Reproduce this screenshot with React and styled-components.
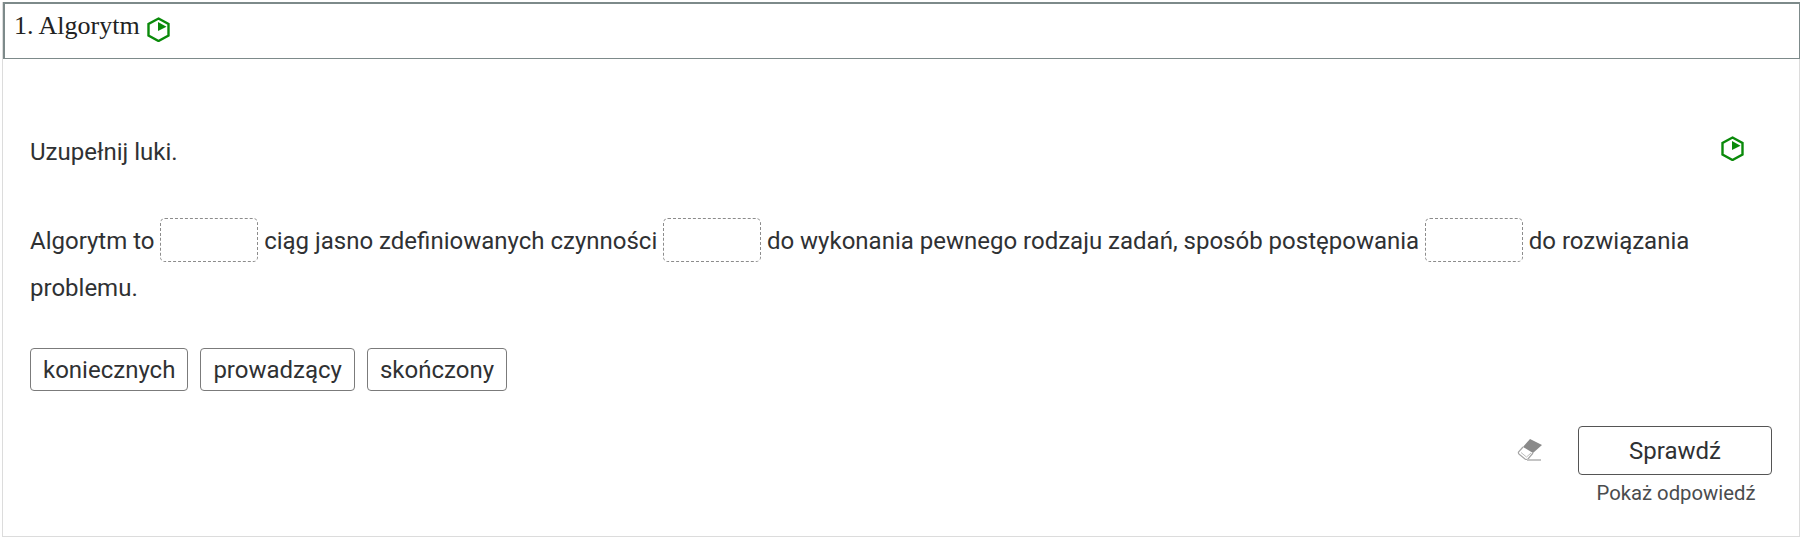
import styled, { createGlobalStyle } from "styled-components";

const GlobalStyle = createGlobalStyle`
  html, body {
    margin: 0;
    padding: 0;
    background: #fff;
  }
`;

const Card = styled.div`
  box-sizing: border-box;
  width: 1798px;
  height: 535px;
  margin: 2px 0 0 2px;
  border: 1px solid #dcdcdc;
  border-top: none;
  font-family: Roboto, sans-serif;
  color: #2f3133;
`;

const Header = styled.div`
  box-sizing: border-box;
  height: 57px;
  margin-right: -1px;
  border: 2px solid #7d8a8a;
  border-bottom-width: 1px;
  border-right-width: 1px;
  padding: 6px 0 0 9px;
  display: flex;
  align-items: flex-start;
  gap: 7px;
`;

const Title = styled.h2`
  margin: 0;
  font-family: "Liberation Serif", serif;
  font-weight: 400;
  font-size: 26px;
  line-height: 32px;
  color: #222;
`;

const TitleIcon = styled.span`
  display: flex;
  margin-top: 7px;
`;

const Body = styled.div`
  padding: 0 27px;
`;

const Prompt = styled.div`
  display: flex;
  justify-content: space-between;
  align-items: flex-start;
  margin-top: 78px;
  height: 30px;
  padding-right: 28px;
  font-size: 24px;
  line-height: 30px;
`;

const PromptIcon = styled.span`
  display: flex;
  margin-top: -1px;
`;

const Sentence = styled.p`
  margin: 51px 0 0;
  font-size: 24px;
  line-height: 47px;
`;

const Blank = styled.span`
  display: inline-block;
  box-sizing: border-box;
  width: 98px;
  height: 44px;
  margin-left: 5.7px;
  border: 1px dashed #8c8c8c;
  border-radius: 5px;
  vertical-align: -13px;
`;

const Chips = styled.div`
  display: flex;
  gap: 12px;
  margin-top: 36px;
`;

const Chip = styled.div`
  box-sizing: border-box;
  height: 43px;
  padding: 0 12px;
  border: 1px solid #7b7b7b;
  border-radius: 4px;
  font-size: 24px;
  line-height: 42px;
`;

const Actions = styled.div`
  display: flex;
  justify-content: flex-end;
  gap: 35px;
  margin-top: 35px;
`;

const Eraser = styled.span`
  display: flex;
  margin-top: 12px;
`;

const ActionColumn = styled.div`
  display: flex;
  flex-direction: column;
  align-items: center;
  width: 194px;
`;

const CheckButton = styled.button`
  box-sizing: border-box;
  width: 194px;
  height: 49px;
  background: #fff;
  border: 1px solid #555;
  border-radius: 4px;
  font-family: inherit;
  font-size: 24px;
  color: #2f3133;
`;

const ShowAnswer = styled.div`
  margin-top: 5px;
  padding-left: 2px;
  font-size: 20.3px;
  line-height: 26px;
  color: #4a4c4e;
`;

const HexIcon = () => (
  <svg width="23" height="25" viewBox="0 0 23 25">
    <path
      d="M11.5 1.5 L21.5 7 V18.5 L11.5 24 L1.5 18.5 V7 Z"
      fill="none"
      stroke="#0a8a0a"
      strokeWidth="2.4"
    />
    <path d="M11 5 L19.5 9.8 L11 14 Z" fill="#0a8a0a" />
  </svg>
);

const EraserIcon = () => (
  <svg width="26" height="24" viewBox="0 0 26 24">
    <path d="M13 1 L25 7 L16 15 L6 9 Z" fill="#8a8a8a" />
    <path
      d="M6 9 L1.5 14 Q1 15.5 2.5 16.5 L8 21 Q9.5 22 11 21 L16 15"
      fill="none"
      stroke="#a5a5a5"
      strokeWidth="1.2"
    />
    <path d="M4 14.5 L9.5 19 L14 15" fill="none" stroke="#bdbdbd" strokeWidth="1" />
    <rect x="10" y="21" width="14" height="2" fill="#c4c4c4" />
  </svg>
);

export default function App() {
  return (
    <>
      <GlobalStyle />
      <Card>
        <Header>
          <Title>1. Algorytm</Title>
          <TitleIcon>
            <HexIcon />
          </TitleIcon>
        </Header>
        <Body>
          <Prompt>
            <span>Uzupełnij luki.</span>
            <PromptIcon>
              <HexIcon />
            </PromptIcon>
          </Prompt>
          <Sentence>
            Algorytm to<Blank /> ciąg jasno zdefiniowanych czynności<Blank /> do
            wykonania pewnego rodzaju zadań, sposób postępowania<Blank /> do
            rozwiązania problemu.
          </Sentence>
          <Chips>
            <Chip>koniecznych</Chip>
            <Chip>prowadzący</Chip>
            <Chip>skończony</Chip>
          </Chips>
          <Actions>
            <Eraser>
              <EraserIcon />
            </Eraser>
            <ActionColumn>
              <CheckButton>Sprawdź</CheckButton>
              <ShowAnswer>Pokaż odpowiedź</ShowAnswer>
            </ActionColumn>
          </Actions>
        </Body>
      </Card>
    </>
  );
}
